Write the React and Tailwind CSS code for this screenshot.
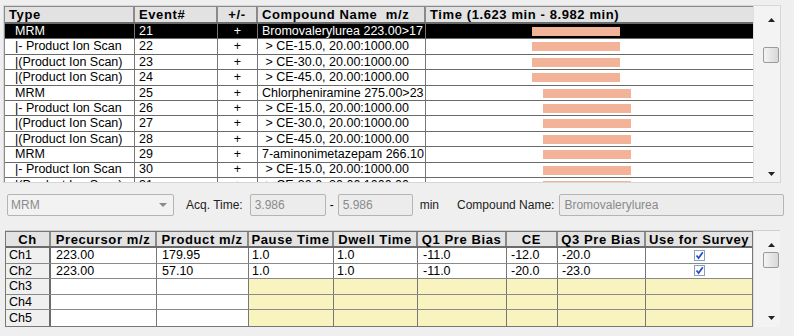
import React from "react";

const topRows = [
  { type: "MRM", ev: "21", cmp: "Bromovalerylurea 223.00>17", bar: 106, sel: true },
  { type: "|- Product Ion Scan", ev: "22", cmp: " > CE-15.0, 20.00:1000.00", bar: 106 },
  { type: "|(Product Ion Scan)", ev: "23", cmp: " > CE-30.0, 20.00:1000.00", bar: 106 },
  { type: "|(Product Ion Scan)", ev: "24", cmp: " > CE-45.0, 20.00:1000.00", bar: 106 },
  { type: "MRM", ev: "25", cmp: "Chlorpheniramine 275.00>23", bar: 117 },
  { type: "|- Product Ion Scan", ev: "26", cmp: " > CE-15.0, 20.00:1000.00", bar: 117 },
  { type: "|(Product Ion Scan)", ev: "27", cmp: " > CE-30.0, 20.00:1000.00", bar: 117 },
  { type: "|(Product Ion Scan)", ev: "28", cmp: " > CE-45.0, 20.00:1000.00", bar: 117 },
  { type: "MRM", ev: "29", cmp: "7-aminonimetazepam 266.10", bar: 117 },
  { type: "|- Product Ion Scan", ev: "30", cmp: " > CE-15.0, 20.00:1000.00", bar: 117 },
  { type: "|(Product Ion Scan)", ev: "31", cmp: " > CE-30.0, 20.00:1000.00", bar: 117 },
];

const chRows = [
  { ch: "Ch1", pre: "223.00", pro: "179.95", pause: "1.0", dwell: "1.0", q1: "-11.0", ce: "-12.0", q3: "-20.0", use: true },
  { ch: "Ch2", pre: "223.00", pro: "57.10", pause: "1.0", dwell: "1.0", q1: "-11.0", ce: "-20.0", q3: "-23.0", use: true },
  { ch: "Ch3" },
  { ch: "Ch4" },
  { ch: "Ch5" },
];

const Arrow = ({ up }) => (
  <svg width="7" height="4" viewBox="0 0 7 4">
    <path d={up ? "M0 4 L3.5 0 L7 4 Z" : "M0 0 L3.5 4 L7 0 Z"} fill="#222" />
  </svg>
);

const ScrollBar = ({ thumbTop, height, downTop }) => (
  <div className="relative w-[27px] bg-[#f3f3f3] border-l border-[#e0e0e0]" style={{ height }}>
    <div className="absolute left-[14px] top-[12px]">
      <Arrow up />
    </div>
    <div
      className="absolute left-[9px] w-[16px] h-[16px] rounded-[2px] border border-[#9a9a9a] bg-gradient-to-r from-[#f4f4f4] to-[#d8d8d8]"
      style={{ top: thumbTop }}
    />
    <div className="absolute left-[14px]" style={{ top: downTop }}>
      <Arrow />
    </div>
  </div>
);

const Check = () => (
  <div className="w-[11px] h-[11px] border border-[#8aa0c0] bg-white flex items-center justify-center">
    <svg width="9" height="9" viewBox="0 0 9 9">
      <path d="M1.5 4.5 L3.6 7 L7.8 1.3" stroke="#2a50c8" strokeWidth="1.8" fill="none" />
    </svg>
  </div>
);

export default function App() {
  return (
    <div className="w-[794px] h-[336px] bg-[#efefef] overflow-hidden font-['Liberation_Sans',Arial,sans-serif] text-[12.5px] text-black leading-none">
      {/* top event table */}
      <div className="ml-[3px] mt-[5px] flex w-[778px] h-[178px] border border-[#d6d6d6]">
        <div className="w-[750px] h-[176px] overflow-hidden border-l border-t border-[#8a8a8a] bg-white">
          <div className="flex h-[17px] bg-[#e2e2e2] border-b-2 border-[#6a6a6a] font-bold text-[13px] tracking-[0.6px]">
            <div className="w-[130px] px-[4px] flex items-center border-r-2 border-[#8a8a8a]">Type</div>
            <div className="w-[83px] px-[4px] flex items-center border-r-2 border-[#8a8a8a]">Event#</div>
            <div className="w-[40px] px-[4px] flex items-center justify-center border-r-2 border-[#8a8a8a]">+/-</div>
            <div className="w-[168px] px-[4px] flex items-center border-r-2 border-[#8a8a8a] whitespace-pre overflow-hidden">Compound Name  m/z</div>
            <div className="flex-1 px-[4px] flex items-center">Time (1.623 min - 8.982 min)</div>
          </div>
          {topRows.map((r, i) => (
            <div
              key={i}
              className={`flex h-[15.4px] border-b border-[#6a6a6a] ${r.sel ? "bg-black text-white" : ""}`}
            >
              <div className="w-[130px] pl-[10px] flex items-center border-r border-[#777] whitespace-pre overflow-hidden">
                {r.type}
              </div>
              <div className="w-[83px] pl-[4px] flex items-center border-r border-[#777]">{r.ev}</div>
              <div className="w-[40px] flex items-center justify-center border-r border-[#777]">+</div>
              <div className="w-[168px] pl-[4px] flex items-center border-r border-[#777] whitespace-pre overflow-hidden">
                {r.cmp}
              </div>
              <div className="flex-1 relative">
                <div
                  className="absolute top-[3px] h-[9px] w-[88px] bg-[#f3b398]"
                  style={{ left: r.bar }}
                />
              </div>
            </div>
          ))}
        </div>
        <ScrollBar thumbTop={41} height={176} downTop={166} />
      </div>

      {/* middle controls */}
      <div className="flex items-center h-[22px] mt-[11px] ml-[7px] text-[12px]">
        <div className="w-[167px] h-[22px] border border-[#b4b4b4] rounded-[2px] bg-[#f2f2f2] flex items-center justify-between pl-[3px] pr-[6px] text-[#8a8a8a]">
          <span>MRM</span>
          <svg width="8" height="4" viewBox="0 0 8 4">
            <path d="M0 0 L4 4 L8 0 Z" fill="#8a8a8a" />
          </svg>
        </div>
        <span className="ml-[12px] text-[#222]">Acq. Time:</span>
        <div className="ml-[7px] w-[76px] h-[22px] border border-[#b4b4b4] rounded-[2px] bg-[#ececec] flex items-center pl-[4px] text-[#8a8a8a]">
          3.986
        </div>
        <span className="ml-[4px]">-</span>
        <div className="ml-[4px] w-[75px] h-[22px] border border-[#b4b4b4] rounded-[2px] bg-[#ececec] flex items-center pl-[4px] text-[#8a8a8a]">
          5.986
        </div>
        <span className="ml-[7px] text-[#222]">min</span>
        <span className="ml-[18px] text-[#222]">Compound Name:</span>
        <div className="ml-[5px] w-[225px] h-[22px] border border-[#b4b4b4] rounded-[2px] bg-[#ececec] flex items-center pl-[4px] text-[#8a8a8a]">
          Bromovalerylurea
        </div>
      </div>

      {/* channel table */}
      <div className="ml-[5px] mt-[14px] flex w-[775px] h-[97px] border-t border-[#cfcfcf]">
        <div className="w-[752px] border border-[#777] bg-white">
          <div className="flex h-[16px] bg-[#e3e3e3] border-b-2 border-[#6a6a6a] font-bold tracking-[0.6px] text-[13px]">
            <div className="w-[45px] flex items-center justify-center border-r-2 border-[#8a8a8a]">Ch</div>
            <div className="w-[106px] flex items-center justify-center border-r-2 border-[#8a8a8a]">Precursor m/z</div>
            <div className="w-[92px] flex items-center justify-center border-r-2 border-[#8a8a8a]">Product m/z</div>
            <div className="w-[85px] flex items-center justify-center border-r-2 border-[#8a8a8a]">Pause Time</div>
            <div className="w-[84px] flex items-center justify-center border-r-2 border-[#8a8a8a]">Dwell Time</div>
            <div className="w-[89px] flex items-center justify-center border-r-2 border-[#8a8a8a]">Q1 Pre Bias</div>
            <div className="w-[51px] flex items-center justify-center border-r-2 border-[#8a8a8a]">CE</div>
            <div className="w-[88px] flex items-center justify-center border-r-2 border-[#8a8a8a]">Q3 Pre Bias</div>
            <div className="flex-1 flex items-center justify-center">Use for Survey</div>
          </div>
          {chRows.map((r, i) => {
            const y = r.pause ? "bg-white" : "bg-[#f8f3bf]";
            return (
              <div key={i} className="flex h-[15.6px] border-b border-[#8a8a8a] last:border-b-0">
                <div className="w-[45px] pl-[3px] flex items-center bg-[#f0f0f0] border-r-2 border-[#6a6a6a]">{r.ch}</div>
                <div className="w-[106px] pl-[5px] flex items-center border-r border-[#777]">{r.pre}</div>
                <div className="w-[92px] pl-[5px] flex items-center border-r border-[#777]">{r.pro}</div>
                <div className={`w-[85px] pl-[3px] flex items-center border-r border-[#777] ${y}`}>{r.pause}</div>
                <div className={`w-[84px] pl-[3px] flex items-center border-r border-[#777] ${y}`}>{r.dwell}</div>
                <div className={`w-[89px] pl-[5px] flex items-center border-r border-[#777] ${y}`}>{r.q1}</div>
                <div className={`w-[51px] pl-[4px] flex items-center border-r border-[#777] ${y}`}>{r.ce}</div>
                <div className={`w-[88px] pl-[4px] flex items-center border-r border-[#777] ${y}`}>{r.q3}</div>
                <div className={`flex-1 flex items-center justify-center ${y}`}>{r.use && <Check />}</div>
              </div>
            );
          })}
        </div>
        <ScrollBar thumbTop={21} height={96} downTop={85} />
      </div>
    </div>
  );
}
